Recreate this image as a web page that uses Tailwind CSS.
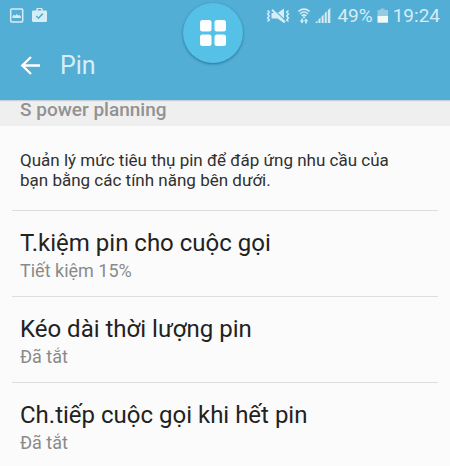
<!DOCTYPE html>
<html lang="vi">
<head>
<meta charset="utf-8">
<meta name="viewport" content="width=device-width, initial-scale=1">
<title>Pin</title>
<script src="https://cdn.jsdelivr.net/npm/@tailwindcss/browser@4"></script>
</head>
<body class="min-h-screen overflow-x-hidden bg-[#fbfbfb] font-[Roboto,'Noto_Sans',sans-serif] text-[#222]">
<header class="relative bg-[#53aed5] pb-4 shadow-[0_1px_1px_#c4d2d8]">
  <div class="flex h-8 items-center justify-between pl-2 pr-[10px] text-[19px] leading-8 text-[#d6edf6]">
    <div class="flex items-center gap-2">
      <svg class="h-4 w-4" viewBox="0 0 16 16" fill="none" aria-hidden="true">
        <rect x="2.7" y="1" width="12" height="13" rx="1" stroke="currentColor" stroke-width="1.5"/>
        <path d="M4.500 10V8l1.500-1.300 1.300 1L8.700 6l1.400 1.500 1-.5 1.700 1.200V10z" fill="currentColor"/>
      </svg>
      <svg class="h-4 w-4" viewBox="0 0 16 16" fill="none" aria-hidden="true">
        <path d="M5 4V2Q5 .2 6.300.2h2.400Q10 .2 10 2v2" stroke="currentColor" stroke-width="1.500"/>
        <rect y="2.500" width="15" height="11.500" rx="1.200" fill="currentColor"/>
        <path d="M4.300 8 6.500 10.200 10.800 5.600" stroke="#53aed5" stroke-width="1.600"/>
      </svg>
    </div>
    <div class="flex items-center">
      <svg class="h-4 w-6" viewBox="0 0 24 16" fill="none" stroke="currentColor" aria-hidden="true">
        <path d="M1.500 2.500 3.300 4 1.600 6l1.700 2-1.700 2 1.700 2-1.800 1.500M22.500 2.500 20.700 4l1.700 2-1.700 2 1.700 2-1.700 2 1.800 1.500" stroke-width="1.500"/>
        <path d="M5.500 5h6L18 .5V15l-6.500-4.500h-6z" fill="currentColor" stroke="none"/>
        <path d="M7.500 1.500 19.500 12.800" stroke="#53aed5" stroke-width="1.300"/>
        <path d="M6 1.800 19 14.300" stroke-width="1.900"/>
      </svg>
      <svg class="ml-2 h-4 w-3" viewBox="0 0 12 16" fill="none" stroke="currentColor" stroke-width="1.500" aria-hidden="true">
        <path d="M.4 3.400q5.600-4.600 11.200 0M2 5.700q4-3.400 8 0M3.600 7.900q2.400-2 4.800 0"/>
        <circle cx="6" cy="9.300" r="1.100" fill="currentColor" stroke="none"/>
        <path d="M3.200 10.400h1.600v2.200h1.400L4 15.400l-2.200-2.800h1.400zM7.200 15.400h1.600v-2.200h1.400L8 10.400l-2.200 2.800h1.400z" fill="currentColor" stroke="none"/>
      </svg>
      <svg class="ml-[5px] h-4 w-4" viewBox="0 0 16 16" fill="currentColor" aria-hidden="true">
        <path d="M0 15l2.500-2.500V15zM3.500 11.500l2-2V15h-2zM6.600 8.400l2-2V15h-2zM9.700 5.300l2-2V15h-2zM12.800 2.200 15.300 0v15h-2.500z"/>
      </svg>
      <span class="ml-[6px]">49%</span>
      <svg class="ml-1 h-4 w-3" viewBox="0 0 12 16" aria-hidden="true">
        <path d="M3.500.500h4V2H11v6.500H.500V2h3z" fill="#94cbe3"/>
        <path d="M.500 8H11v6.700H.500z" fill="#eff8fb"/>
      </svg>
      <span class="ml-1">19:24</span>
    </div>
  </div>
  <div class="flex h-[52px] items-center gap-5 px-5 pt-4">
    <button type="button" aria-label="Quay lại" class="text-white">
      <svg class="block h-5 w-5" viewBox="0 0 20 20" fill="none" stroke="currentColor" stroke-width="2.300" aria-hidden="true">
        <path d="M20 9.500H2.500M11 1 2.300 9.500 11 18"/>
      </svg>
    </button>
    <h1 class="text-[25px] leading-9 text-[#d8eef7]">Pin</h1>
  </div>
  <button type="button" aria-label="Ứng dụng" class="absolute left-1/2 top-[3px] flex h-[60px] w-[60px] -translate-x-[42px] items-center justify-center rounded-full bg-[#56c1e7] shadow-[0_1px_3px_#247397]">
    <svg class="h-[27px] w-[27px]" viewBox="0 0 27 27" fill="#fbfdfe" aria-hidden="true">
      <rect x="0" y="0" width="11.500" height="11.500" rx="2.500"/><rect x="14.500" y="0" width="11.500" height="11.500" rx="2.500"/>
      <rect x="0" y="14.500" width="11.500" height="11.500" rx="2.500"/><rect x="14.500" y="14.500" width="11.500" height="11.500" rx="2.500"/>
    </svg>
  </button>
</header>
<main>
  <h2 class="bg-[#efefef] px-5 pb-[6px] text-[19px] leading-5 font-medium text-[#929292]">S power planning</h2>
  <p class="px-5 pb-5 pt-6 text-[17px] leading-5 text-[#303030]">Quản lý mức tiêu thụ pin để đáp ứng nhu cầu của<br>bạn bằng các tính năng bên dưới.</p>
  <ul class="px-3">
    <li class="border-t border-[#dedede]"><a href="#" class="block px-2 pb-[13px] pt-4">
      <span class="block text-2xl">T.kiệm pin cho cuộc gọi</span><span class="block text-lg leading-6 text-[#8a8a8a]">Tiết kiệm 15%</span></a></li>
    <li class="border-t border-[#dedede]"><a href="#" class="block px-2 pb-[13px] pt-4">
      <span class="block text-2xl">Kéo dài thời lượng pin</span><span class="block text-lg leading-6 text-[#8a8a8a]">Đã tắt</span></a></li>
    <li class="border-t border-[#dedede]"><a href="#" class="block px-2 pb-2 pt-4">
      <span class="block text-2xl">Ch.tiếp cuộc gọi khi hết pin</span><span class="block text-lg leading-6 text-[#8a8a8a]">Đã tắt</span></a></li>
  </ul>
</main>
</body>
</html>
